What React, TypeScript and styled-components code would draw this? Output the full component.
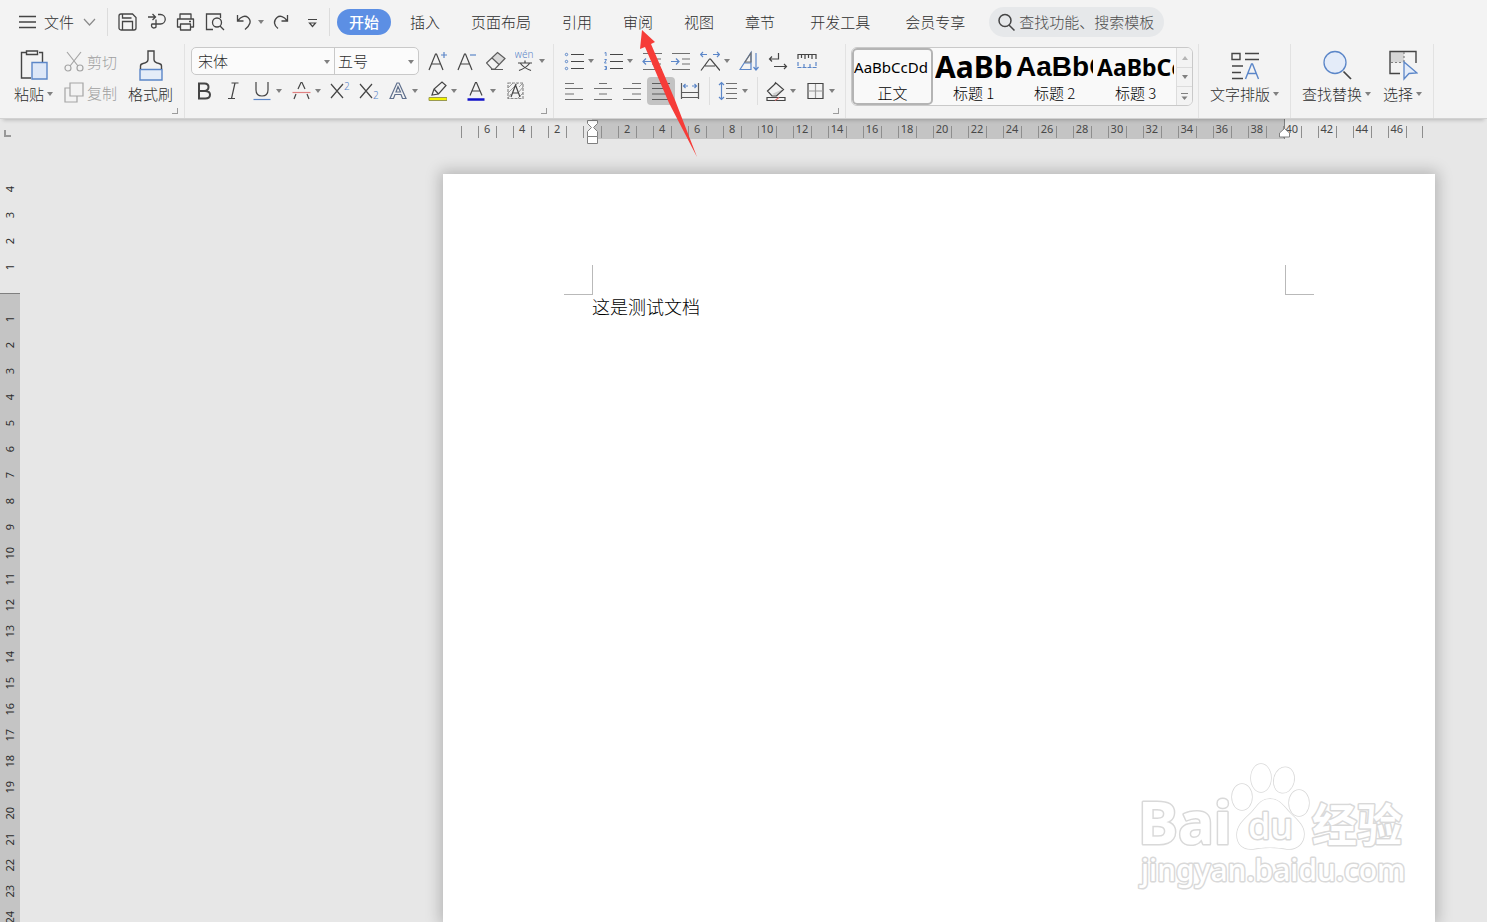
import React from "react";
import styled, { createGlobalStyle, css } from "styled-components";

const UI = `"Noto Sans CJK SC", "Noto Sans", sans-serif`;
const INK = "#454545";
const BLUE = "#5b86c8";

const GlobalStyle = createGlobalStyle`
  * { box-sizing: border-box; }
  html, body, #root { height: 100%; }
  body { margin: 0; background: #e7e7e7; font-family: ${UI}; font-size: 15px; color: #2e2e2e; overflow: hidden; }
  button, select, input { font: inherit; color: inherit; }
  button { background: none; border: 0; padding: 0; }
  svg { display: block; flex: none; }
`;

const Shell = styled.div`
  position: relative;
  height: 100%;
  display: flex;
  flex-direction: column;
  overflow: hidden;
`;

/* ---------- menu bar ---------- */

const MenuBar = styled.nav`
  flex: none;
  height: 44px;
  display: flex;
  align-items: center;
  padding-left: 18px;
  background: #f3f3f3;
  font-weight: 300;
`;

const FileButton = styled.button`
  display: flex;
  align-items: center;
  gap: 7px;
  padding-right: 10px;
  line-height: 20px;
`;

const MenuDivider = styled.span`
  width: 1px;
  height: 28px;
  background: #dcdcdc;
`;

const QuickAccess = styled.div`
  display: flex;
  align-items: center;
  gap: 9px;
  padding: 0 7px 0 10px;
`;

const Tabs = styled.div`
  display: flex;
  align-items: center;
  gap: 7px;
  padding-left: 7px;
`;

const Tab = styled.button<{ $active?: boolean; $wide?: boolean }>`
  height: 26px;
  padding: 0 12px;
  border-radius: 13px;
  line-height: 26px;
  white-space: nowrap;
  margin-left: ${(p) => (p.$wide ? 4 : 0)}px;
  ${(p) =>
    p.$active &&
    css`
      background: #5c8fe4;
      color: #fff;
      font-weight: 500;
    `}
`;

const SearchBox = styled.label`
  display: flex;
  align-items: center;
  gap: 3px;
  width: 175px;
  height: 30px;
  margin-left: 12px;
  padding: 0 8px;
  border-radius: 15px;
  background: #e6e8ea;
  input {
    flex: 1;
    min-width: 0;
    height: 24px;
    padding: 0 0 2px;
    border: 0;
    outline: 0;
    background: none;
    font-weight: 300;
  }
  input::placeholder { color: #4c4c4c; opacity: 1; }
`;

/* ---------- ribbon ---------- */

const Ribbon = styled.header`
  position: relative;
  z-index: 2;
  flex: none;
  display: flex;
  height: 75px;
  background: #f3f3f3;
  border-bottom: 1px solid #d2d2d2;
  box-shadow: 0 4px 4px -3px rgba(0, 0, 0, 0.22);
  font-weight: 300;
`;

const Group = styled.section<{ $pad: string; $gap?: number }>`
  position: relative;
  display: flex;
  gap: ${(p) => p.$gap ?? 0}px;
  padding: ${(p) => p.$pad};
  border-right: 1px solid #e2e2e2;
`;

const Launcher = styled.button`
  position: absolute;
  right: 6px;
  bottom: 4px;
  width: 6px;
  height: 6px;
  border: solid #9c9c9c;
  border-width: 0 1px 1px 0;
`;

const BigButton = styled.button`
  display: flex;
  flex-direction: column;
  align-items: center;
  gap: 2px;
  padding-top: 2px;
  white-space: nowrap;
`;

const BigLabel = styled.span`
  display: flex;
  align-items: center;
  gap: 3px;
  line-height: 22px;
`;

const ClipStack = styled.div`
  display: flex;
  flex-direction: column;
  gap: 9px;
  padding-top: 4px;
`;

const ClipButton = styled.button`
  display: flex;
  align-items: center;
  gap: 3px;
  line-height: 22px;
  color: #a0a0a0;
`;

const ToolRows = styled.div`
  display: flex;
  flex-direction: column;
  gap: 2px;
`;

const ToolRow = styled.div<{ $indent?: boolean }>`
  display: flex;
  align-items: center;
  gap: 9px;
  height: 28px;
  padding-left: ${(p) => (p.$indent ? 3 : 0)}px;
`;

const ToolButton = styled.button<{ $on?: boolean }>`
  display: flex;
  align-items: center;
  gap: 4px;
  height: 28px;
  ${(p) =>
    p.$on &&
    css`
      margin: 0 -4px;
      padding: 0 4px;
      border-radius: 4px;
      background: #c3c3c3;
    `}
`;

const ToolDivider = styled.span`
  width: 1px;
  height: 28px;
  margin-right: -1px;
  background: #dedede;
`;

const Combos = styled.div`
  display: flex;
  height: 28px;
  border: 1px solid #c9c9c9;
  border-radius: 5px;
  background: #fbfbfb;
`;

const Combo = styled.label<{ $width: number }>`
  position: relative;
  width: ${(p) => p.$width}px;
  & + & { border-left: 1px solid #c9c9c9; }
  select {
    appearance: none;
    width: 100%;
    height: 26px;
    padding: 0 16px 2px ${(p) => (p.$width > 100 ? 6 : 3)}px;
    border: 0;
    outline: 0;
    background: none;
    font-weight: 300;
  }
  svg { position: absolute; right: 4px; top: 12px; pointer-events: none; }
`;

const Gallery = styled.div`
  display: flex;
  height: 59px;
  border: 1px solid #c9c9c9;
  border-radius: 6px;
  background: #f9f9f9;
  overflow: hidden;
`;

const StyleItem = styled.button<{ $selected?: boolean }>`
  display: flex;
  flex-direction: column;
  align-items: center;
  width: 81px;
  height: 57px;
  padding: 2px 0 0;
  border: 2px solid ${(p) => (p.$selected ? "#b4b4b4" : "transparent")};
  border-radius: 5px;
  color: #000;
`;

const Sample = styled.span<{ $size: number; $bold?: boolean; $arial?: boolean }>`
  width: 77px;
  height: 32px;
  overflow: hidden;
  text-align: left;
  white-space: nowrap;
  line-height: 30px;
  font-family: ${(p) => (p.$arial ? `"Liberation Sans"` : `"Noto Sans"`)}, sans-serif;
  font-size: ${(p) => p.$size}px;
  font-weight: ${(p) => (p.$bold ? 700 : 400)};
`;

const StyleName = styled.span`
  line-height: 20px;
`;

const GalleryScroll = styled.div`
  display: grid;
  grid-template-rows: 19px 19px 19px;
  width: 16px;
  border-left: 1px solid #dcdcdc;
  button {
    display: flex;
    align-items: center;
    justify-content: center;
    background: #f3f3f3;
  }
  button + button { border-top: 1px solid #dcdcdc; }
`;

/* ---------- workspace ---------- */

const Workspace = styled.main`
  flex: 1;
  min-height: 0;
  display: flex;
  overflow: hidden;
`;

const VerticalRuler = styled.aside`
  flex: none;
  width: 20px;
  overflow: hidden;
`;

const TabStop = styled.button`
  display: block;
  width: 7px;
  height: 7px;
  margin: 11px 0 39px 4px;
  border: solid #999;
  border-width: 0 0 2px 2px;
`;

const VerticalPart = styled.div<{ $shaded?: boolean }>`
  padding: ${(p) => (p.$shaded ? "12px 0 0" : "0 0 13px")};
  ${(p) =>
    p.$shaded &&
    css`
      background: #c4c4c4;
      border-top: 1px solid #808080;
    `}
`;

const VerticalMark = styled.div`
  display: flex;
  align-items: center;
  justify-content: center;
  height: 26px;
  font: 11px/20px "Noto Sans", sans-serif;
  span { writing-mode: vertical-rl; transform: rotate(180deg); }
`;

const DocumentColumn = styled.div`
  flex: none;
  display: flex;
  flex-direction: column;
  width: 992px;
  margin: 0 52px 0 auto;
`;

const HorizontalRuler = styled.div`
  position: relative;
  flex: none;
  display: grid;
  grid-template-columns: repeat(55, 1fr);
  height: 20px;
  margin: 0 12px 35px 18px;
  color: #484848;
  background: linear-gradient(
    to right,
    transparent 131px,
    #c4c4c4 131px,
    #c4c4c4 823px,
    #808080 823px,
    #808080 824px,
    transparent 824px
  );
`;

const Tick = styled.span`
  display: flex;
  justify-content: center;
  font: 11px/20px "Noto Sans", sans-serif;
  background: linear-gradient(#8e8e8e, #8e8e8e) 0 7px / 1px 12px no-repeat;
  &:last-of-type {
    background:
      linear-gradient(#8e8e8e, #8e8e8e) 0 7px / 1px 12px no-repeat,
      linear-gradient(#8e8e8e, #8e8e8e) 100% 7px / 1px 12px no-repeat;
  }
`;

const IndentMarker = styled.svg<{ $right?: boolean }>`
  position: absolute;
  top: ${(p) => (p.$right ? 8 : 0)}px;
  left: ${(p) => (p.$right ? 817 : 125)}px;
`;

const Page = styled.article`
  flex: 1;
  padding: 91px 121px 0;
  background: #fff;
  box-shadow: 0 0 14px 3px rgba(0, 0, 0, 0.22);
`;

const Margins = styled.div`
  display: flex;
  justify-content: space-between;
`;

const MarginCorner = styled.span<{ $side: "left" | "right" }>`
  width: 29px;
  height: 30px;
  border-bottom: 1px solid #b9b9b9;
  border-${(p) => (p.$side === "left" ? "right" : "left")}: 1px solid #b9b9b9;
`;

const Paragraph = styled.p`
  margin: 0 28px;
  font-size: 18px;
  line-height: 22px;
  font-weight: 300;
  color: #000;
`;

const Pointer = styled.svg`
  position: absolute;
  z-index: 5;
  left: 638px;
  top: 29px;
  pointer-events: none;
`;

const Watermark = styled.svg`
  position: absolute;
  z-index: 4;
  right: 72px;
  bottom: 22px;
  pointer-events: none;
`;

/* ---------- icons ---------- */

const Icon = ({ w = 20, h = 22, children }: { w?: number; h?: number; children: React.ReactNode }) => (
  <svg width={w} height={h} viewBox={`0 0 ${w} ${h}`} fill="none" stroke={INK} strokeWidth="1.2" aria-hidden="true">
    {children}
  </svg>
);

const Caret = ({ up }: { up?: boolean }) => (
  <svg width="6" height="4" viewBox="0 0 6 4" aria-hidden="true">
    <path d={up ? "M0 4h6L3 0z" : "M0 0h6L3 4z"} fill={up ? "#b5b5b5" : "#808080"} />
  </svg>
);

const Tool = ({ label, menu, on, children }: { label: string; menu?: boolean; on?: boolean; children: React.ReactNode }) => (
  <ToolButton type="button" aria-label={label} $on={on}>
    <Icon>{children}</Icon>
    {menu && <Caret />}
  </ToolButton>
);

const tabs = [
  { name: "开始", active: true },
  { name: "插入" },
  { name: "页面布局" },
  { name: "引用" },
  { name: "审阅" },
  { name: "视图" },
  { name: "章节" },
  { name: "开发工具", wide: true },
  { name: "会员专享", wide: true },
];

const styles = [
  { name: "正文", text: "AaBbCcDd", size: 15 },
  { name: "标题 1", text: "AaBb", size: 30, bold: true },
  { name: "标题 2", text: "AaBbC", size: 28, bold: true, arial: true },
  { name: "标题 3", text: "AaBbCc", size: 23, bold: true },
];

const rulerUnits = Array.from({ length: 55 }, (_, i) => i - 7);
const above = [4, 3, 2, 1];
const below = Array.from({ length: 40 }, (_, i) => i + 1);

export default function App() {
  return (
    <Shell>
      <GlobalStyle />
      <MenuBar>
        <FileButton type="button">
          <Icon w={19} h={16}>
            <path d="M1 2.5h17M1 8h17M1 13.5h17" strokeWidth="1.4" />
          </Icon>
          文件
          <Icon w={16} h={12}>
            <path d="M3 3l5.5 6L14 3" stroke="#8a8a8a" />
          </Icon>
        </FileButton>
        <MenuDivider />
        <QuickAccess>
          <Tool label="保存">
            <path d="M3 3h11.5l3.500 3.500V17a2 2 0 0 1-2 2H3a2 2 0 0 1-2-2V5a2 2 0 0 1 2-2zM4.500 19v-8.500h10V19M4.500 3v4h9" strokeWidth="1.3" />
          </Tool>
          <Tool label="输出为PDF">
            <path d="M1 6h7M5.500 3l3 3-3 3M11 3.500h2.500a4.500 4.500 0 0 1 0 9.500H5a2.500 2.500 0 1 0 4 3V8.500" strokeWidth="1.3" />
          </Tool>
          <Tool label="打印">
            <path d="M4 8V3h11v5M4.500 16H1.500V8h16v8h-3M4.500 13h10v6h-10zM13 10.500h2" strokeWidth="1.3" strokeLinejoin="round" />
          </Tool>
          <Tool label="打印预览">
            <path d="M8 18.500H1.500V3h14v4M15 15l4 4" strokeWidth="1.3" />
            <circle cx="12" cy="11.500" r="4.500" strokeWidth="1.3" />
          </Tool>
          <Tool label="撤销" menu>
            <path d="M3.500 4v6h6M4 9.500C7 5.500 11 4 14 6.500c4 3.500 2 8-3 12" strokeWidth="1.3" />
          </Tool>
          <Tool label="恢复">
            <path d="M14.500 4v6h-6M14 9.500C11 5.500 7 4 4 6.500c-4 3.500-3 8 1 11" strokeWidth="1.3" />
          </Tool>
          <Tool label="自定义快速访问工具栏">
            <path d="M6 8.500h9M7.500 12l3 3.500 3-3.500z" />
          </Tool>
        </QuickAccess>
        <MenuDivider />
        <Tabs>
          {tabs.map((t) => (
            <Tab key={t.name} type="button" $active={t.active} $wide={t.wide}>
              {t.name}
            </Tab>
          ))}
        </Tabs>
        <SearchBox>
          <Icon w={19} h={20}>
            <circle cx="8" cy="8.500" r="6" strokeWidth="1.5" />
            <path d="M12 13l5.500 5.500" strokeWidth="1.500" />
          </Icon>
          <input type="text" aria-label="搜索" placeholder="查找功能、搜索模板" />
        </SearchBox>
      </MenuBar>

      <Ribbon>
        <Group $pad="3px 11px 0 14px" $gap={11}>
          <BigButton type="button">
            <Icon w={30} h={32}>
              <path d="M7 3.500H2.500v25.500H12M20 3.500h3.500V13" strokeWidth="1.400" />
              <path d="M7.500 2h11v3.500h-11z" strokeWidth="1.400" />
              <path d="M13 13.500h15V30H13z" fill="#dde7f7" stroke={BLUE} strokeWidth="1.400" />
            </Icon>
            <BigLabel>
              粘贴
              <Caret />
            </BigLabel>
          </BigButton>
          <ClipStack>
            <ClipButton type="button">
              <Icon>
                <g stroke="#a5a5a5">
                  <path d="M3 1l11 14M17 1L6 15" />
                  <circle cx="4" cy="17" r="3" />
                  <circle cx="16" cy="17" r="3" />
                </g>
              </Icon>
              剪切
            </ClipButton>
            <ClipButton type="button">
              <Icon>
                <path d="M6 1h13v13H6zM6 6H1v14h12v-6" stroke="#a5a5a5" />
              </Icon>
              复制
            </ClipButton>
          </ClipStack>
          <BigButton type="button">
            <Icon w={26} h={32}>
              <path d="M2 20.500h22V31H2z" fill="#e4ecf8" stroke={BLUE} strokeWidth="1.400" />
              <path d="M2.500 20v-3q0-2 2.500-2.500 5-1 5-4V2h6v8.500q0 3 5 4 2.500.5 2.500 2.500v3" strokeWidth="1.400" />
            </Icon>
            <BigLabel>格式刷</BigLabel>
          </BigButton>
          <Launcher type="button" aria-label="剪贴板选项" />
        </Group>

        <Group $pad="3px 8px 0 6px">
          <ToolRows>
            <ToolRow>
              <Combos>
                <Combo $width={142}>
                  <select aria-label="字体" defaultValue="宋体">
                    <option>宋体</option>
                  </select>
                  <Caret />
                </Combo>
                <Combo $width={84}>
                  <select aria-label="字号" defaultValue="五号">
                    <option>五号</option>
                  </select>
                  <Caret />
                </Combo>
              </Combos>
              <Tool label="增大字号">
                <path d="M1 20L7.500 4h1L15 20M3.500 14h9" />
                <path d="M13 5h6M16 2v6" stroke={BLUE} />
              </Tool>
              <Tool label="减小字号">
                <path d="M1 20L7.500 4h1L15 20M3.500 14h9" />
                <path d="M13 5h6" stroke={BLUE} />
              </Tool>
              <Tool label="清除格式">
                <path d="M6 8l6-6 7 6-6 6.500z" fill="#d9d9d9" stroke="none" />
                <path d="M0.500 13L11.500 2.500l7.500 6-10 10.500H6zM6 8l7 6.500M5 19.500h12" stroke="#5c5c5c" />
              </Tool>
              <Tool label="拼音指南" menu>
                <path d="M3 13h14M10 10.500V13M5.500 13.500Q9 18 16 20.500M14.500 13.500Q11 18 4 20.500" strokeWidth="1.2" />
                <text x="9" y="8" textAnchor="middle" fontFamily="Noto Sans" fontSize="10" fill={BLUE} stroke="none">
                  wén
                </text>
              </Tool>
            </ToolRow>
            <ToolRow $indent>
              <Tool label="加粗">
                <path d="M5 3.500h5.500q4 0 4 3.600T10.500 11H5zM5 11h6q5 0 5 3.800t-5 3.700H5z" strokeWidth="2" />
              </Tool>
              <Tool label="倾斜">
                <path d="M8.500 3h7M5 18.500h7M12 3L8.500 18.500" strokeWidth="1.2" />
              </Tool>
              <Tool label="下划线" menu>
                <path d="M4 2v8q0 6 6 6t6-6V2" />
                <path d="M1.500 19.500h17" stroke={BLUE} />
              </Tool>
              <Tool label="删除线" menu>
                <path d="M7 9l3-6.500h1L14 9M5 14l-2 5M16 14l2 5" />
                <path d="M1.500 12.500h18" stroke="#e08080" />
              </Tool>
              <Tool label="上标">
                <path d="M1 4l12 14M13 4L1 18" />
                <text x="14" y="10" fontFamily="Noto Sans" fontSize="10" fill={BLUE} stroke="none">2</text>
              </Tool>
              <Tool label="下标">
                <path d="M1 4l12 14M13 4L1 18" />
                <text x="14" y="19" fontFamily="Noto Sans" fontSize="10" fill={BLUE} stroke="none">2</text>
              </Tool>
              <Tool label="文字效果" menu>
                <path d="M2 18.500L9 3h2l7 15.500h-3.500L13 14.500H7l-1.500 4zM8 12h4.500L10 6.500z" stroke="#5f6f8c" />
              </Tool>
              <Tool label="突出显示" menu>
                <path d="M5 15l2-6 8-7 4 3.500-7.500 8.500zM7 9l4.500 5" />
                <path d="M2 17.500h18v3H2z" fill="#f4f400" stroke="#9a9a50" strokeWidth="1" />
              </Tool>
              <Tool label="字体颜色" menu>
                <path d="M4 15.500L9.500 2.500h1L16 15.500M6 11h8" />
                <path d="M1.500 19.500h17" stroke="#1212c8" strokeWidth="2.500" />
              </Tool>
              <Tool label="字符底纹">
                <path d="M3 8l5-5M3 13L13 3M13 13l5-6M13 18l5-5M3 18l3-4M14 7l4-4" stroke="#9a9a9a" strokeWidth="1" />
                <path d="M3 3h15v15.500H3z" stroke="#8a8a8a" strokeDasharray="3 1" />
                <path d="M6 17l4.500-12L15 17M7.500 13h6" />
              </Tool>
            </ToolRow>
          </ToolRows>
          <Launcher type="button" aria-label="字体选项" />
        </Group>

        <Group $pad="3px 10px 0 10px">
          <ToolRows>
            <ToolRow>
              <Tool label="项目符号" menu>
                <path d="M7 4.500h13M7 11.500h13M7 18.500h13" />
                <g stroke={BLUE} strokeWidth="1">
                  <circle cx="2.500" cy="4.500" r="1.200" />
                  <circle cx="2.500" cy="11.500" r="1.200" />
                  <circle cx="2.500" cy="18.500" r="1.200" />
                </g>
              </Tool>
              <Tool label="编号" menu>
                <path d="M7 4.500h13M7 11.500h13M7 18.500h13" />
                <path d="M1.500 3L3 2.500V6M1.500 9.500h2L1.500 13h2M1.500 16.500h2v3h-2M2 18h1.500" stroke={BLUE} strokeWidth="1" />
              </Tool>
              <Tool label="减少缩进量">
                <path d="M1 3.500h19M10 9h9M10 14h9M1 19.500h19" stroke="#707070" />
                <path d="M9 11.500H1M4 8.500l-3 3 3 3" stroke={BLUE} />
              </Tool>
              <Tool label="增加缩进量">
                <path d="M1 3.500h18M11 9h8M11 14h8M1 19.500h18" stroke="#707070" />
                <path d="M0 11.500h8M5 8.500l3 3-3 3" stroke={BLUE} />
              </Tool>
              <Tool label="中文版式" menu>
                <path d="M1 20.500L9.500 9h1L20 20.500M5 16h10" />
                <path d="M7 4.500H1M3 2L.5 4.500 3 7M13 4.500h6M17 2l2.500 2.500L17 7" stroke={BLUE} />
              </Tool>
              <Tool label="排序">
                <path d="M1 19.500L12 2.500v17zM5.500 13H12" stroke={BLUE} />
                <path d="M6 12L12 3v9z" stroke="#707070" />
                <path d="M17 3v17M14.500 17l2.500 3 2.500-3" stroke={BLUE} />
              </Tool>
              <Tool label="段落标记">
                <path d="M10.500 3v6H1.500M4 6.500L1.500 9 4 11.500M6 16.500h12.500M16 14l2.500 2.500L16 19" />
              </Tool>
              <Tool label="制表位">
                <path d="M1 9V4.500h18V9M4.500 5v3M8 5v4M11.500 5v3M15 5v4" />
                <path d="M1 12v5.500h18V12M7 17.500V14M13 17.500V14" stroke={BLUE} strokeDasharray="4 1" />
              </Tool>
            </ToolRow>
            <ToolRow>
              <Tool label="左对齐">
                <path d="M1 3.500h9M1 8.500h18M1 14h9M1 19.500h18" stroke="#707070" />
              </Tool>
              <Tool label="居中">
                <path d="M6 3.500h8M1 8.500h18M6 14h8M1 19.500h18" stroke="#707070" />
              </Tool>
              <Tool label="右对齐">
                <path d="M10 3.500h9M1 8.500h18M10 14h9M1 19.500h18" stroke="#707070" />
              </Tool>
              <Tool label="两端对齐" on>
                <path d="M1 3.500h18M1 8.500h18M1 14h18M1 19.500h18" stroke="#5c5c5c" />
              </Tool>
              <Tool label="分散对齐">
                <path d="M1.500 3v16M18.500 3v16M2 12.500h16M2 17.500h16" stroke="#5c5c5c" />
                <path d="M8 6H3.500M5.500 4l-2 2 2 2M12 6h4.500M14.500 4l2 2-2 2" stroke={BLUE} />
              </Tool>
              <ToolDivider />
              <Tool label="行距" menu>
                <path d="M8 3.500h11M8 8.500h11M8 13.500h11M8 18.500h11" stroke="#707070" />
                <path d="M3.500 2.500v17M1 5l2.500-2.500L6 5M1 17l2.500 2.500L6 17" stroke={BLUE} />
              </Tool>
              <ToolDivider />
              <Tool label="底纹颜色" menu>
                <path d="M6 14L17 9l-6 7z" fill="#cfcfcf" stroke="none" />
                <path d="M1.500 11L10 3l7.500 6.500-7 6.500H6zM8 5l2-3M1 17.500h18v3H1z" />
                <path d="M9 20.500l4-3" stroke="#e07070" />
              </Tool>
              <Tool label="边框" menu>
                <path d="M3 3.500h15v15H3z" />
                <path d="M10.500 4v14M3 11h15" stroke="#9a9a9a" />
              </Tool>
            </ToolRow>
          </ToolRows>
          <Launcher type="button" aria-label="段落选项" />
        </Group>

        <Group $pad="3px 5px 0 5px">
          <Gallery>
            {styles.map((s, i) => (
              <StyleItem key={s.name} type="button" $selected={i === 0}>
                <Sample $size={s.size} $bold={s.bold} $arial={s.arial}>
                  {s.text}
                </Sample>
                <StyleName>{s.name}</StyleName>
              </StyleItem>
            ))}
            <GalleryScroll>
              <button type="button" aria-label="上一行">
                <Caret up />
              </button>
              <button type="button" aria-label="下一行">
                <Caret />
              </button>
              <button type="button" aria-label="更多样式">
                <Icon w={9} h={9}>
                  <path d="M1 1.500h7" stroke="#808080" />
                  <path d="M1.500 4.500h6L4.500 8z" fill="#808080" stroke="none" />
                </Icon>
              </button>
            </GalleryScroll>
          </Gallery>
        </Group>

        <Group $pad="3px 11px 0 11px">
          <BigButton type="button">
            <Icon w={30} h={32}>
              <path d="M2 4.500h8v6H2zM15 4.500h14M15 10.500h14M2 17h11M2 23.500h9M2 29.500h11" strokeWidth="1.400" />
              <path d="M15.500 30L21.500 15h1L28.500 30M18 24.500h8" stroke={BLUE} strokeWidth="1.400" />
            </Icon>
            <BigLabel>
              文字排版
              <Caret />
            </BigLabel>
          </BigButton>
        </Group>

        <Group $pad="3px 11px 0 11px" $gap={12}>
          <BigButton type="button">
            <Icon w={30} h={32}>
              <path d="M21.500 22.500l7.500 7.500" strokeWidth="1.700" />
              <circle cx="13" cy="13.500" r="11" fill="#e4ecf9" stroke={BLUE} strokeWidth="1.300" />
            </Icon>
            <BigLabel>
              查找替换
              <Caret />
            </BigLabel>
          </BigButton>
          <BigButton type="button">
            <Icon w={30} h={32}>
              <path d="M2 2.500h14v11H2z" fill="#d6d6d6" stroke="none" />
              <path d="M12 24.500H2v-22h26V14" strokeWidth="1.400" />
              <path d="M3 13.500h12M16 3v10" stroke="#808080" strokeDasharray="2 2" />
              <path d="M16 13v17l5-5.500 8-.5z" fill="#e4ecf9" stroke={BLUE} strokeWidth="1.300" />
            </Icon>
            <BigLabel>
              选择
              <Caret />
            </BigLabel>
          </BigButton>
        </Group>
      </Ribbon>

      <Workspace>
        <VerticalRuler>
          <TabStop type="button" aria-label="制表符" />
          <VerticalPart>
            {above.map((n) => (
              <VerticalMark key={n}>
                <span>{n}</span>
              </VerticalMark>
            ))}
          </VerticalPart>
          <VerticalPart $shaded>
            {below.map((n) => (
              <VerticalMark key={n}>
                <span>{n}</span>
              </VerticalMark>
            ))}
          </VerticalPart>
        </VerticalRuler>

        <DocumentColumn>
          <HorizontalRuler>
            {rulerUnits.map((n) => (
              <Tick key={n}>{n !== 0 && n % 2 === 0 ? Math.abs(n) : ""}</Tick>
            ))}
            <IndentMarker width="13" height="26" viewBox="0 0 13 26" fill="#fff" stroke="#808080">
              <path d="M1.500 1.500h10v3l-4 4 4 4v5h-10v-5l4-4-4-4z" />
              <path d="M1.500 17.500h10v7h-10z" />
            </IndentMarker>
            <IndentMarker $right width="13" height="12" viewBox="0 0 13 12" fill="#fff" stroke="#808080">
              <path d="M6.500 1.500L1.500 6v4h10V6z" />
            </IndentMarker>
          </HorizontalRuler>
          <Page>
            <Margins>
              <MarginCorner $side="left" />
              <MarginCorner $side="right" />
            </Margins>
            <Paragraph>这是测试文档</Paragraph>
          </Page>
        </DocumentColumn>
      </Workspace>

      <Watermark
        width="280"
        height="140"
        viewBox="0 0 280 140"
        fill="#fff"
        stroke="#d9d9d9"
        strokeWidth="3"
        paintOrder="stroke"
        strokeLinejoin="round"
      >
        <text x="3" y="84" fontFamily="Noto Sans" fontWeight="700" fontSize="60">Bai</text>
        <g strokeWidth="1.500">
          <ellipse cx="107" cy="37" rx="10" ry="13" />
          <ellipse cx="126" cy="18" rx="10" ry="14" />
          <ellipse cx="149" cy="20" rx="10" ry="13" transform="rotate(14 149 20)" />
          <ellipse cx="164" cy="43" rx="10" ry="13" />
          <path d="M135 39c10 0 14 8 20 14s14 12 14 21c0 10-8 16-17 15-10-2-24-2-34 0-10 1-16-5-16-14 0-10 8-16 14-22s9-14 19-14z" />
        </g>
        <text x="113" y="79" fontFamily="Noto Sans" fontWeight="500" fontSize="36">du</text>
        <text x="177" y="82" fontFamily="Noto Sans CJK SC" fontWeight="700" fontSize="45">经验</text>
        <text x="6" y="121" fontFamily="Noto Sans" fontSize="30" fontWeight="500">jingyan.baidu.com</text>
      </Watermark>

      <Pointer width="62" height="130" viewBox="0 0 62 130">
        <path d="M4 1L17 13l-4 2L37 71 59 128 31 74 7 18l-5 2z" fill="#f63c38" />
      </Pointer>
    </Shell>
  );
}
